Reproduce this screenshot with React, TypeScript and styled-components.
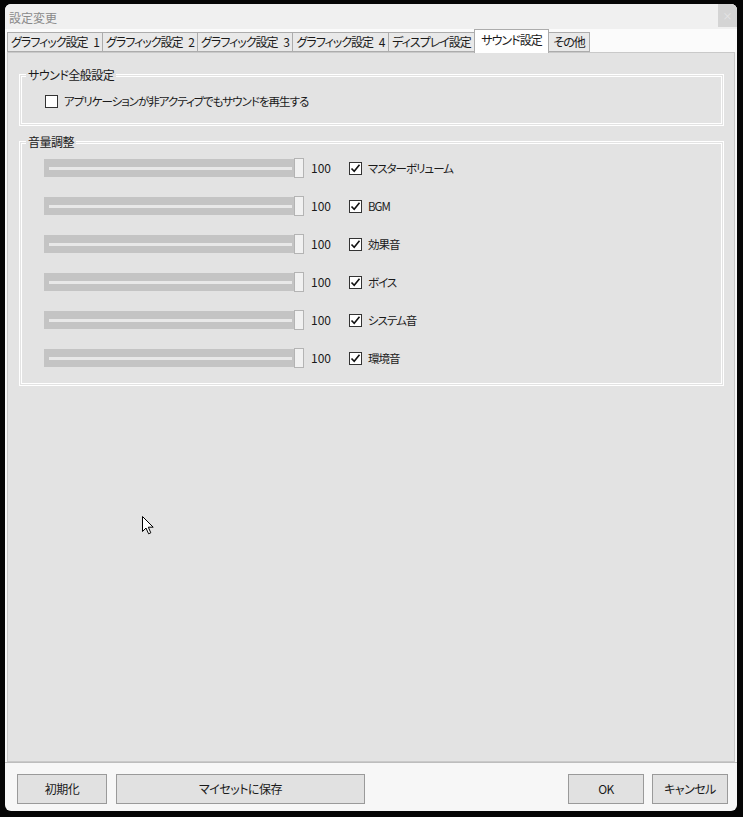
import React from "react";
import styled, { createGlobalStyle } from "styled-components";

const GlobalStyle = createGlobalStyle`
  html, body { margin: 0; padding: 0; background: #000; }
  body {
    font-family: "Noto Sans CJK JP", "Noto Sans", sans-serif;
    font-feature-settings: "palt";
    font-size: 12px;
    color: #1a1a1a;
  }
  * { box-sizing: border-box; }
`;

const Screen = styled.div`
  width: 743px;
  height: 817px;
  padding: 4px 6px 6px 5px;
  background: #050505;
`;

const Window = styled.div`
  position: relative;
  width: 732px;
  height: 807px;
  border-radius: 6px;
  background: #f7f7f7;
  display: flex;
  flex-direction: column;
  overflow: hidden;
`;

const TitleBar = styled.div`
  height: 25px;
  background: #f0f0f0;
  display: flex;
  align-items: center;
  justify-content: space-between;
  padding-left: 4px;
`;

const Title = styled.span`
  color: #8a8a8a;
  font-size: 12px;
  line-height: 16px;
  margin-top: 2px;
`;

const CloseBtn = styled.div`
  width: 19px;
  height: 24px;
  align-self: flex-start;
  margin-top: -1px;
  background: #d4d4d4;
  color: #e6e6e6;
  font-size: 10px;
  display: flex;
  align-items: center;
  justify-content: center;
`;

const TabStrip = styled.div`
  height: 23px;
  display: flex;
  align-items: flex-end;
  padding-left: 2px;
  position: relative;
  z-index: 1;
  background: #fbfbfb;
`;

const Tab = styled.div<{ $w: number; $active?: boolean }>`
  width: ${(p) => p.$w}px;
  height: ${(p) => (p.$active ? 24 : 20)}px;
  margin-left: -1px;
  margin-bottom: ${(p) => (p.$active ? -1 : 0)}px;
  border: 1px solid #acacac;
  border-bottom: ${(p) => (p.$active ? "none" : "1px solid #acacac")};
  background: ${(p) => (p.$active ? "#ffffff" : "#e9e9e9")};
  display: flex;
  align-items: ${(p) => (p.$active ? "flex-start" : "center")};
  padding-top: ${(p) => (p.$active ? 2 : 0)}px;
  justify-content: center;
  font-size: 12px;
  letter-spacing: -1px;
  word-spacing: 4px;
  line-height: 16px;
  white-space: nowrap;
  z-index: ${(p) => (p.$active ? 2 : 1)};
  &:first-child { margin-left: 0; }
`;

const Panel = styled.div`
  flex: 1;
  margin: 0 2px 0 2px;
  background: #e3e3e3;
  border: 1px solid #c9c9c9;
  padding: 14px 10px 0 11px;
  display: flex;
  flex-direction: column;
  gap: 8px;
`;

const Group = styled.fieldset<{ $pt: number; $pb: number }>`
  margin: 0;
  border: 3px double #ffffff;
  padding: ${(p) => p.$pt}px 0 ${(p) => p.$pb}px 0;
  min-width: 0;
`;

const Legend = styled.legend`
  margin-left: 4px;
  padding: 0 2px;
  font-size: 12px;
  letter-spacing: -0.5px;
  line-height: 16px;
  color: #1a1a1a;
`;

const GroupBody = styled.div<{ $pl: number }>`
  padding-left: ${(p) => p.$pl}px;
  display: flex;
  flex-direction: column;
  gap: 20px;
`;

const Row = styled.div`
  display: flex;
  align-items: center;
  height: 18px;
`;

const CheckRow = styled.label`
  display: flex;
  align-items: center;
  gap: 6px;
  height: 16px;
  font-size: 11.5px;
  letter-spacing: -1px;
  line-height: 16px;
  white-space: nowrap;
`;

const Box = styled.span`
  width: 13px;
  height: 13px;
  border: 1px solid #333333;
  background: #ffffff;
  display: flex;
  align-items: center;
  justify-content: center;
  flex: none;
`;

const Track = styled.div`
  width: 260px;
  height: 18px;
  position: relative;
  display: flex;
  align-items: center;
  padding-left: 5px;
  flex: none;
`;

const TrackFill = styled.div`
  width: 250px;
  height: 18px;
  background: #c4c4c4;
  position: absolute;
  left: 0;
  top: 0;
`;

const TrackLine = styled.div`
  position: relative;
  width: 243px;
  height: 3px;
  background: #e8e8e8;
  margin-top: 1px;
`;

const Thumb = styled.div`
  position: absolute;
  right: 0;
  top: -1px;
  width: 10px;
  height: 20px;
  background: #f1f1f1;
  border: 1px solid #b4b4b4;
`;

const Value = styled.span`
  width: 45px;
  padding-left: 7px;
  font-size: 12px;
  line-height: 16px;
  flex: none;
`;

const BottomBar = styled.div`
  height: 49px;
  display: flex;
  align-items: flex-start;
  padding: 11px 9px 0 12px;
  gap: 9px;
  border-top: 1px solid #bdbdbd;
`;

const Button = styled.div<{ $w: number }>`
  width: ${(p) => p.$w}px;
  height: 30px;
  background: #e1e1e1;
  border: 1px solid #9a9a9a;
  display: flex;
  align-items: center;
  justify-content: center;
  font-size: 12px;
  letter-spacing: -0.5px;
  line-height: 16px;
  flex: none;
`;

const Spacer = styled.div`
  flex: 1;
`;

const RightButtons = styled.div`
  display: flex;
  gap: 8px;
`;

const Cursor = styled.svg`
  position: absolute;
  left: 137px;
  top: 512px;
`;

const Check = () => (
  <svg width="11" height="11" viewBox="0 0 11 11">
    <path d="M1.5 5.5 L4.2 8.3 L9.5 1.8" fill="none" stroke="#111" strokeWidth="1.6" />
  </svg>
);

const CheckBox = ({ checked }: { checked?: boolean }) => <Box>{checked ? <Check /> : null}</Box>;

const tabs: { label: string; w: number; active?: boolean }[] = [
  { label: "グラフィック設定 1", w: 96 },
  { label: "グラフィック設定 2", w: 96 },
  { label: "グラフィック設定 3", w: 96 },
  { label: "グラフィック設定 4", w: 97 },
  { label: "ディスプレイ設定", w: 87 },
  { label: "サウンド設定", w: 75, active: true },
  { label: "その他", w: 42 },
];

const volumes = ["マスターボリューム", "BGM", "効果音", "ボイス", "システム音", "環境音"];

export default function App() {
  return (
    <>
      <GlobalStyle />
      <Screen>
        <Window>
          <TitleBar>
            <Title>設定変更</Title>
            <CloseBtn>×</CloseBtn>
          </TitleBar>
          <TabStrip>
            {tabs.map((t) => (
              <Tab key={t.label} $w={t.w} $active={t.active}>
                {t.label}
              </Tab>
            ))}
          </TabStrip>
          <Panel>
            <Group $pt={10} $pb={14}>
              <Legend>サウンド全般設定</Legend>
              <GroupBody $pl={23}>
                <CheckRow>
                  <CheckBox />
                  アプリケーションが非アクティブでもサウンドを再生する
                </CheckRow>
              </GroupBody>
            </Group>
            <Group $pt={9} $pb={16}>
              <Legend>音量調整</Legend>
              <GroupBody $pl={22}>
                {volumes.map((v) => (
                  <Row key={v}>
                    <Track>
                      <TrackFill />
                      <TrackLine />
                      <Thumb />
                    </Track>
                    <Value>100</Value>
                    <CheckRow>
                      <CheckBox checked />
                      {v}
                    </CheckRow>
                  </Row>
                ))}
              </GroupBody>
            </Group>
          </Panel>
          <BottomBar>
            <Button $w={90}>初期化</Button>
            <Button $w={249}>マイセットに保存</Button>
            <Spacer />
            <RightButtons>
              <Button $w={76}>OK</Button>
              <Button $w={76}>キャンセル</Button>
            </RightButtons>
          </BottomBar>
          <Cursor width="13" height="19" viewBox="0 0 13 19">
            <path
              d="M0.5 0.5 L0.5 15.5 L4 12 L6.6 17.8 L8.8 16.8 L6.3 11.2 L11.2 11.2 Z"
              fill="#fff"
              stroke="#000"
              strokeWidth="1"
              strokeLinejoin="miter"
            />
          </Cursor>
        </Window>
      </Screen>
    </>
  );
}
